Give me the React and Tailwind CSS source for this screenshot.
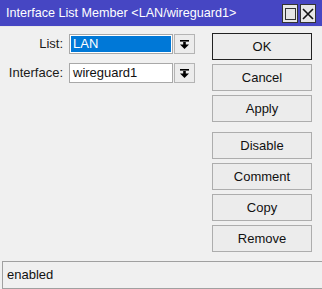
import React from 'react';

const font = { fontFamily: '"Liberation Sans", Arial, sans-serif' };

const DropArrow = () => (
  <svg width="11" height="11" viewBox="0 0 11 11">
    <rect x="1" y="1" width="9" height="1.6" fill="#000" />
    <rect x="4.2" y="3" width="2.6" height="3" fill="#000" />
    <polygon points="1,5.5 10,5.5 5.5,10" fill="#000" />
  </svg>
);

const Field = ({ label, value, selected }) => (
  <div className="flex items-center h-[20px]">
    <div className="w-[64px] pr-[1px] text-right text-[13px] text-[#1a1a1a]">{label}</div>
    <div className="ml-[5px] w-[104px] h-[20px] border border-[#a8a8a8] bg-white p-[1px]">
      <div className={`h-full flex items-center pl-[2px] text-[13px] ${selected ? 'bg-[#0078d7] text-white' : 'text-[#111]'}`}>
        {value}
      </div>
    </div>
    <div className="ml-[1px] w-[21px] h-[20px] border border-[#b4b4b4] bg-[#ececec] flex items-center justify-center">
      <DropArrow />
    </div>
  </div>
);

const Btn = ({ children, primary, className = '' }) => (
  <div
    className={`w-[100px] h-[27px] flex items-center justify-center text-[13px] text-[#111] bg-[#ececec] border ${
      primary ? 'border-[#222]' : 'border-[#adadad]'
    } ${className}`}
  >
    {children}
  </div>
);

export default function App() {
  return (
    <div className="w-[322px] h-[289px] bg-[#f0f0f0] overflow-hidden" style={font}>
      {/* TITLE BAR */}
      <div className="h-[26px] bg-[#4646c3] flex items-center pl-[6px] pr-[6px]">
        <span className="text-white text-[12.6px] flex-1 whitespace-nowrap">Interface List Member &lt;LAN/wireguard1&gt;</span>
        <div className="flex gap-[2px] mt-[1px]">
          <div className="w-[16px] h-[19px] bg-[#e6e6e6] border border-[#333] flex items-center justify-center">
            <div className="w-[11px] h-[12px] border border-[#333]" />
          </div>
          <div className="w-[16px] h-[19px] bg-[#e6e6e6] border border-[#333] flex items-center justify-center">
            <svg width="12" height="12" viewBox="0 0 12 12">
              <path d="M1 1 L11 11 M11 1 L1 11" stroke="#111" strokeWidth="1.6" />
            </svg>
          </div>
        </div>
      </div>

      {/* BODY */}
      <div className="h-[235px] flex border-t border-[#e8e8e8]">
        <div className="w-[212px] pt-[7px] flex flex-col gap-[9px]">
          <Field label="List:" value="LAN" selected />
          <Field label="Interface:" value="wireguard1" />
        </div>
        <div className="pt-[6px] flex flex-col gap-[4px]">
          <Btn primary>OK</Btn>
          <Btn>Cancel</Btn>
          <Btn>Apply</Btn>
          <Btn className="mt-[6px]">Disable</Btn>
          <Btn>Comment</Btn>
          <Btn>Copy</Btn>
          <Btn>Remove</Btn>
        </div>
      </div>

      {/* STATUS */}
      <div className="h-[28px] ml-[2px] border-t border-l border-b border-[#a0a0a0] flex items-center pl-[4px] text-[13px] text-[#111]">
        enabled
      </div>
    </div>
  );
}
